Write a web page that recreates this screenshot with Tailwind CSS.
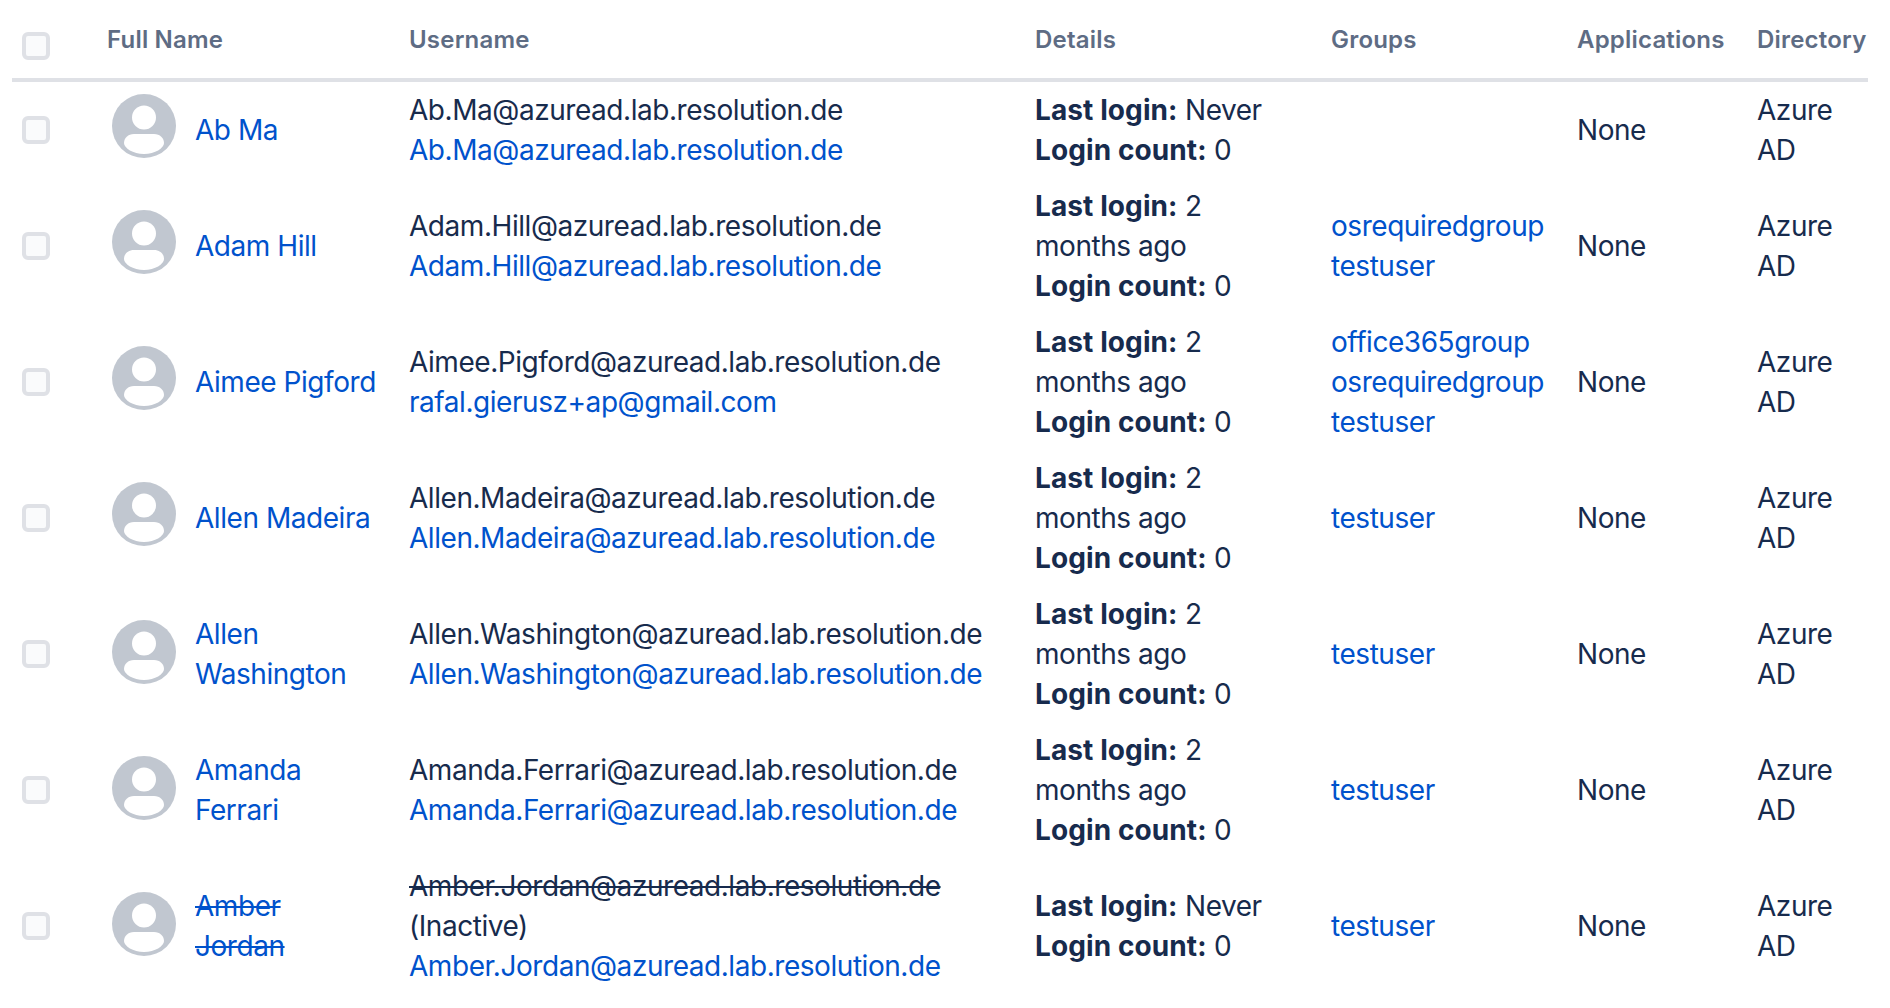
<!DOCTYPE html>
<html lang="en">
<head>
<meta charset="UTF-8">
<title>Users</title>
<script src="https://cdn.jsdelivr.net/npm/@tailwindcss/browser@4"></script>
</head>
<body class="bg-white font-['Inter',sans-serif] text-[28px] leading-[40px] tracking-[-0.45px] text-[#172b4d] overflow-hidden">
<div class="pl-3 pr-[22px]">
<table class="w-full table-fixed border-separate border-spacing-0">
  <colgroup>
    <col class="w-[95px]"><col class="w-[302px]"><col class="w-[626px]"><col class="w-[296px]"><col class="w-[246px]"><col class="w-[180px]"><col>
  </colgroup>
  <thead>
    <tr class="h-[82px] text-left text-[#5e6c84] text-[24px] tracking-[0.2px] align-top">
      <th class="pl-[10px] pt-8 font-semibold border-b-4 border-[#dfe1e6]"><span class="block w-7 h-7 rounded-md border-4 border-[#dfe1e6] bg-[#fafbfc]"></span></th>
      <th class="pt-5 font-semibold border-b-4 border-[#dfe1e6]">Full Name</th>
      <th class="pt-5 font-semibold border-b-4 border-[#dfe1e6]">Username</th>
      <th class="pt-5 font-semibold border-b-4 border-[#dfe1e6]">Details</th>
      <th class="pt-5 font-semibold border-b-4 border-[#dfe1e6]">Groups</th>
      <th class="pt-5 font-semibold border-b-4 border-[#dfe1e6]">Applications</th>
      <th class="pt-5 font-semibold border-b-4 border-[#dfe1e6]">Directory</th>
    </tr>
  </thead>
  <tbody>
    <tr class="h-[96px]">
      <td class="pl-[10px]"><span class="block w-7 h-7 rounded-md border-4 border-[#dfe1e6] bg-[#fafbfc]"></span></td>
      <td><div class="flex items-center gap-[19px] pl-[5px]"><svg class="w-16 h-16 -mt-2 shrink-0" viewBox="0 0 64 64"><circle cx="32" cy="32" r="32" fill="#c1c7d0"/><circle cx="32" cy="23.5" r="12" fill="#fff"/><path d="M22 40h20c6 0 10 4 10 9 0 5-9 11-20 11s-20-6-20-11c0-5 4-9 10-9z" fill="#fff"/></svg><a class="text-[#0052cc]">Ab Ma</a></div></td>
      <td>Ab.Ma@azuread.lab.resolution.de<br><a class="text-[#0052cc]">Ab.Ma@azuread.lab.resolution.de</a></td>
      <td class="pr-10"><b class="tracking-[0.1px]">Last login:</b> Never<br><b class="tracking-[0.1px]">Login count:</b> 0</td>
      <td></td>
      <td>None</td>
      <td>Azure AD</td>
    </tr>
    <tr class="h-[136px]">
      <td class="pl-[10px]"><span class="block w-7 h-7 rounded-md border-4 border-[#dfe1e6] bg-[#fafbfc]"></span></td>
      <td><div class="flex items-center gap-[19px] pl-[5px]"><svg class="w-16 h-16 -mt-2 shrink-0" viewBox="0 0 64 64"><circle cx="32" cy="32" r="32" fill="#c1c7d0"/><circle cx="32" cy="23.5" r="12" fill="#fff"/><path d="M22 40h20c6 0 10 4 10 9 0 5-9 11-20 11s-20-6-20-11c0-5 4-9 10-9z" fill="#fff"/></svg><a class="text-[#0052cc]">Adam Hill</a></div></td>
      <td>Adam.Hill@azuread.lab.resolution.de<br><a class="text-[#0052cc]">Adam.Hill@azuread.lab.resolution.de</a></td>
      <td class="pr-10"><b class="tracking-[0.1px]">Last login:</b> 2 months ago<br><b class="tracking-[0.1px]">Login count:</b> 0</td>
      <td class="text-[#0052cc]">osrequiredgroup<br>testuser</td>
      <td>None</td>
      <td>Azure AD</td>
    </tr>
    <tr class="h-[136px]">
      <td class="pl-[10px]"><span class="block w-7 h-7 rounded-md border-4 border-[#dfe1e6] bg-[#fafbfc]"></span></td>
      <td><div class="flex items-center gap-[19px] pl-[5px]"><svg class="w-16 h-16 -mt-2 shrink-0" viewBox="0 0 64 64"><circle cx="32" cy="32" r="32" fill="#c1c7d0"/><circle cx="32" cy="23.5" r="12" fill="#fff"/><path d="M22 40h20c6 0 10 4 10 9 0 5-9 11-20 11s-20-6-20-11c0-5 4-9 10-9z" fill="#fff"/></svg><a class="text-[#0052cc]">Aimee Pigford</a></div></td>
      <td>Aimee.Pigford@azuread.lab.resolution.de<br><a class="text-[#0052cc]">rafal.gierusz+ap@gmail.com</a></td>
      <td class="pr-10"><b class="tracking-[0.1px]">Last login:</b> 2 months ago<br><b class="tracking-[0.1px]">Login count:</b> 0</td>
      <td class="text-[#0052cc]">office365group<br>osrequiredgroup<br>testuser</td>
      <td>None</td>
      <td>Azure AD</td>
    </tr>
    <tr class="h-[136px]">
      <td class="pl-[10px]"><span class="block w-7 h-7 rounded-md border-4 border-[#dfe1e6] bg-[#fafbfc]"></span></td>
      <td><div class="flex items-center gap-[19px] pl-[5px]"><svg class="w-16 h-16 -mt-2 shrink-0" viewBox="0 0 64 64"><circle cx="32" cy="32" r="32" fill="#c1c7d0"/><circle cx="32" cy="23.5" r="12" fill="#fff"/><path d="M22 40h20c6 0 10 4 10 9 0 5-9 11-20 11s-20-6-20-11c0-5 4-9 10-9z" fill="#fff"/></svg><a class="text-[#0052cc]">Allen Madeira</a></div></td>
      <td>Allen.Madeira@azuread.lab.resolution.de<br><a class="text-[#0052cc]">Allen.Madeira@azuread.lab.resolution.de</a></td>
      <td class="pr-10"><b class="tracking-[0.1px]">Last login:</b> 2 months ago<br><b class="tracking-[0.1px]">Login count:</b> 0</td>
      <td class="text-[#0052cc]">testuser</td>
      <td>None</td>
      <td>Azure AD</td>
    </tr>
    <tr class="h-[136px]">
      <td class="pl-[10px]"><span class="block w-7 h-7 rounded-md border-4 border-[#dfe1e6] bg-[#fafbfc]"></span></td>
      <td><div class="flex items-center gap-[19px] pl-[5px]"><svg class="w-16 h-16 -mt-1 shrink-0" viewBox="0 0 64 64"><circle cx="32" cy="32" r="32" fill="#c1c7d0"/><circle cx="32" cy="23.5" r="12" fill="#fff"/><path d="M22 40h20c6 0 10 4 10 9 0 5-9 11-20 11s-20-6-20-11c0-5 4-9 10-9z" fill="#fff"/></svg><a class="text-[#0052cc]">Allen<br>Washington</a></div></td>
      <td>Allen.Washington@azuread.lab.resolution.de<br><a class="text-[#0052cc]">Allen.Washington@azuread.lab.resolution.de</a></td>
      <td class="pr-10"><b class="tracking-[0.1px]">Last login:</b> 2 months ago<br><b class="tracking-[0.1px]">Login count:</b> 0</td>
      <td class="text-[#0052cc]">testuser</td>
      <td>None</td>
      <td>Azure AD</td>
    </tr>
    <tr class="h-[136px]">
      <td class="pl-[10px]"><span class="block w-7 h-7 rounded-md border-4 border-[#dfe1e6] bg-[#fafbfc]"></span></td>
      <td><div class="flex items-center gap-[19px] pl-[5px]"><svg class="w-16 h-16 -mt-1 shrink-0" viewBox="0 0 64 64"><circle cx="32" cy="32" r="32" fill="#c1c7d0"/><circle cx="32" cy="23.5" r="12" fill="#fff"/><path d="M22 40h20c6 0 10 4 10 9 0 5-9 11-20 11s-20-6-20-11c0-5 4-9 10-9z" fill="#fff"/></svg><a class="text-[#0052cc]">Amanda<br>Ferrari</a></div></td>
      <td>Amanda.Ferrari@azuread.lab.resolution.de<br><a class="text-[#0052cc]">Amanda.Ferrari@azuread.lab.resolution.de</a></td>
      <td class="pr-10"><b class="tracking-[0.1px]">Last login:</b> 2 months ago<br><b class="tracking-[0.1px]">Login count:</b> 0</td>
      <td class="text-[#0052cc]">testuser</td>
      <td>None</td>
      <td>Azure AD</td>
    </tr>
    <tr class="h-[136px]">
      <td class="pl-[10px]"><span class="block w-7 h-7 rounded-md border-4 border-[#dfe1e6] bg-[#fafbfc]"></span></td>
      <td><div class="flex items-center gap-[19px] pl-[5px]"><svg class="w-16 h-16 -mt-1 shrink-0" viewBox="0 0 64 64"><circle cx="32" cy="32" r="32" fill="#c1c7d0"/><circle cx="32" cy="23.5" r="12" fill="#fff"/><path d="M22 40h20c6 0 10 4 10 9 0 5-9 11-20 11s-20-6-20-11c0-5 4-9 10-9z" fill="#fff"/></svg><a class="text-[#0052cc] line-through">Amber<br>Jordan</a></div></td>
      <td><span class="line-through">Amber.Jordan@azuread.lab.resolution.de</span><br>(Inactive)<br><a class="text-[#0052cc]">Amber.Jordan@azuread.lab.resolution.de</a></td>
      <td class="pr-10"><b class="tracking-[0.1px]">Last login:</b> Never<br><b class="tracking-[0.1px]">Login count:</b> 0</td>
      <td class="text-[#0052cc]">testuser</td>
      <td>None</td>
      <td>Azure AD</td>
    </tr>
  </tbody>
</table>
</div>
</body>
</html>
